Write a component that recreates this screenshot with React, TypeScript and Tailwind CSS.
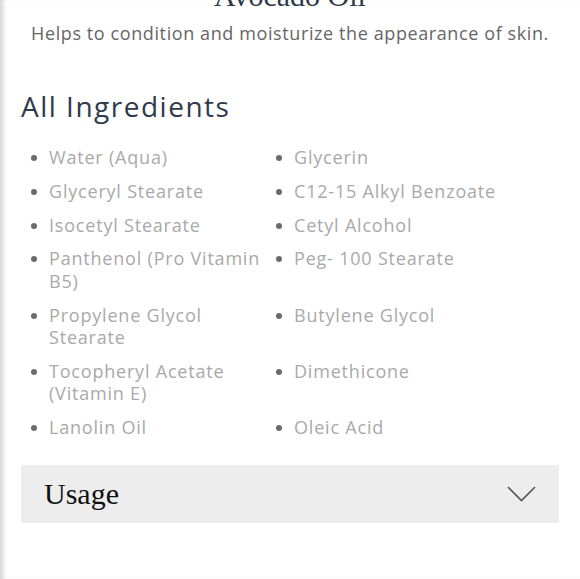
const left = [
  "Water (Aqua)",
  "Glyceryl Stearate",
  "Isocetyl Stearate",
  "Panthenol (Pro Vitamin B5)",
  "Propylene Glycol Stearate",
  "Tocopheryl Acetate (Vitamin E)",
  "Lanolin Oil",
]

const right = [
  "Glycerin",
  "C12-15 Alkyl Benzoate",
  "Cetyl Alcohol",
  "Peg- 100 Stearate",
  "Butylene Glycol",
  "Dimethicone",
  "Oleic Acid",
]

function Item({ name }: { name: string }) {
  return (
    <li className="flex items-start">
      <span className="mt-[9px] ml-[10px] mr-[12px] h-[6px] w-[6px] shrink-0 rounded-full bg-[#6b6b6b]" />
      <span>{name}</span>
    </li>
  )
}

export default function App() {
  return (
    <div className="min-h-[579px] overflow-hidden bg-white font-['Open_Sans',sans-serif] shadow-[inset_6px_0_5px_-3px_rgba(0,0,0,0.18)]">
      {/* Title, cut off at the top */}
      <h2 className="-mt-[22px] text-center font-['Liberation_Serif',serif] text-[30px] leading-[36px] text-[#2f3a48]">
        Avocado Oil
      </h2>
      <p className="mt-[7px] text-center text-[18px] leading-[24px] tracking-[0.6px] text-[#666666]">
        Helps to condition and moisturize the appearance of skin.
      </p>

      <div className="px-[21px]">
        {/* Ingredients */}
        <h3 className="mt-[43px] text-[28px] leading-[36px] tracking-[1.5px] text-[#2f3a4a]">All Ingredients</h3>
        <ul className="mt-[22px] grid grid-cols-[245px_1fr] gap-y-[11.25px] text-[18px] leading-[22.5px] tracking-[0.8px] text-[#a9a9a9]">
          {left.map((a, i) => [<Item key={a} name={a} />, <Item key={right[i]} name={right[i]} />])}
        </ul>

        {/* Usage accordion */}
        <button className="mt-[26px] flex h-[58px] w-full items-center justify-between bg-[#ededed] pl-[23px] pr-[23px]">
          <span className="font-['Liberation_Serif',serif] text-[30px] leading-none text-[#111]">Usage</span>
          <svg width="29" height="16" viewBox="0 0 29 16" fill="none" stroke="#555" strokeWidth="1.6">
            <polyline points="1,1 14.5,14.5 28,1" />
          </svg>
        </button>
      </div>
    </div>
  )
}
